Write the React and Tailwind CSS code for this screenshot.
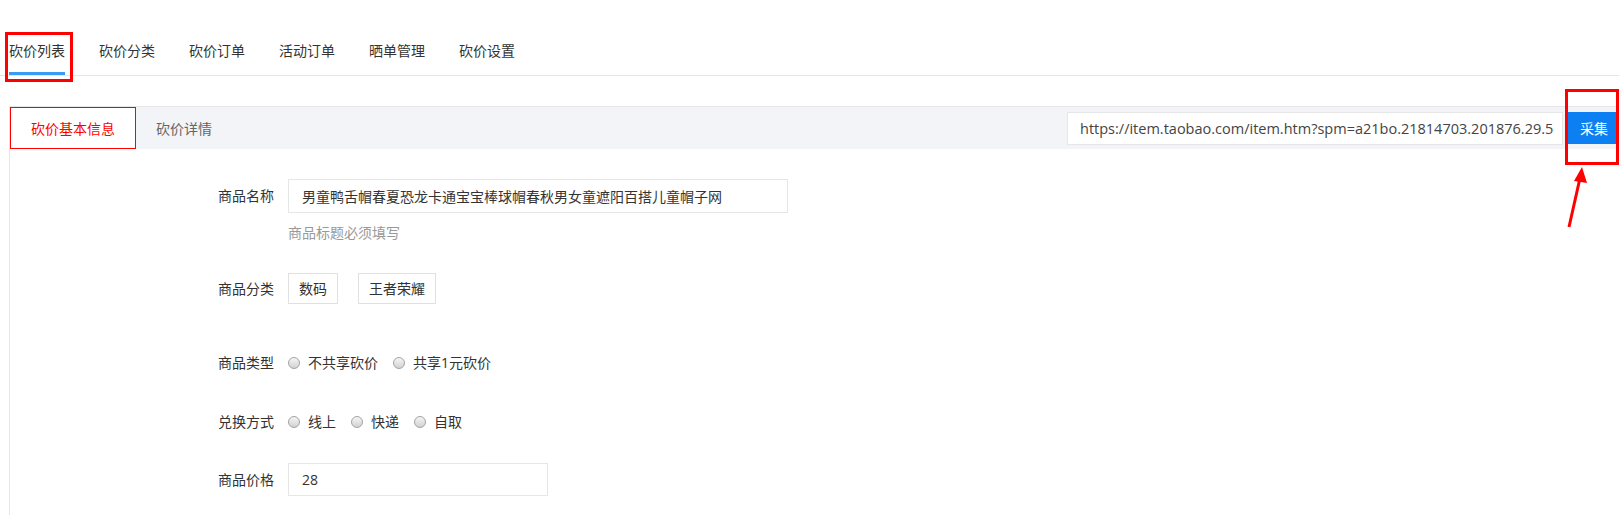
import React from 'react';

const navTabs = ['砍价列表', '砍价分类', '砍价订单', '活动订单', '晒单管理', '砍价设置'];

const Radio = ({ label }) => (
  <label className="flex items-center gap-[8px]">
    <span className="w-[12px] h-[12px] rounded-full border border-[#a3a3a3] bg-[linear-gradient(180deg,#f5f5f5,#d2d2d2)]" />
    <span className="text-[14px] leading-[20px] text-[#333]">{label}</span>
  </label>
);

function Row({ label, children, className = '' }) {
  return (
    <div className={`flex items-center ${className}`}>
      <div className="w-[264px] pr-0 text-right text-[14px] leading-[20px] text-[#333]">{label}</div>
      <div className="ml-[14px] flex items-center">{children}</div>
    </div>
  );
}

export default function App() {
  return (
    <div className="relative w-full h-[515px] overflow-hidden bg-white font-['Open_Sans','Noto_Sans_CJK_SC',sans-serif] text-[#333]">
      {/* 顶部导航 */}
      <div className="flex gap-[34px] pl-[9px] pt-[30px] border-b border-[#e6e6e6]">
        {navTabs.map((t, i) => (
          <div
            key={t}
            className={`text-[14px] leading-[42px] border-b-[3px] ${i === 0 ? 'border-[#3a9bf5]' : 'border-transparent'}`}
          >
            {t}
          </div>
        ))}
      </div>

      <div className="ml-[9px] mt-[30px] border-l border-[#e6e6e6] h-[500px]">
        {/* 标签栏 */}
        <div className="flex items-center h-[43px] border-t border-[#e6e6e6] bg-[#f3f4f8]">
          <div className="h-[42px] px-[20px] flex items-center border border-[#ff0000] bg-white text-[#ff0000] text-[14px]">
            砍价基本信息
          </div>
          <div className="px-[20px] text-[14px] text-[#666]">砍价详情</div>
          <div className="ml-auto flex items-center">
            <input
              readOnly
              value="https://item.taobao.com/item.htm?spm=a21bo.21814703.201876.29.5e2f11d9ZvGwkQ&id=622380913"
              className="w-[496px] h-[33px] bg-white border border-[#e6e6e6] pl-[12px] pr-[8px] text-[14.5px] text-[#444] outline-none font-['Open_Sans',sans-serif]"
            />
            <button className="ml-[3px] -mr-[3px] w-[56px] h-[32px] bg-[#0c7ff2] text-white text-[14px]">采集</button>
          </div>
        </div>

        {/* 表单 */}
        <Row label="商品名称" className="mt-[30px]">
          <input
            readOnly
            value="男童鸭舌帽春夏恐龙卡通宝宝棒球帽春秋男女童遮阳百搭儿童帽子网"
            className="w-[500px] h-[34px] border border-[#e6e6e6] pl-[13px] text-[14px] text-[#333] outline-none"
          />
        </Row>
        <div className="mt-[10px] pl-[278px] text-[14px] leading-[20px] text-[#999]">商品标题必须填写</div>

        <Row label="商品分类" className="mt-[30px]">
          <div className="flex gap-[20px]">
            <span className="h-[31px] px-[10px] flex items-center border border-[#e0e0e0] text-[14px]">数码</span>
            <span className="h-[31px] px-[10px] flex items-center border border-[#e0e0e0] text-[14px]">王者荣耀</span>
          </div>
        </Row>

        <Row label="商品类型" className="mt-[49px]">
          <div className="flex gap-[15px]">
            <Radio label="不共享砍价" />
            <Radio label="共享1元砍价" />
          </div>
        </Row>

        <Row label="兑换方式" className="mt-[39px]">
          <div className="flex gap-[15px]">
            <Radio label="线上" />
            <Radio label="快递" />
            <Radio label="自取" />
          </div>
        </Row>

        <Row label="商品价格" className="mt-[31px]">
          <input
            readOnly
            value="28"
            className="w-[260px] h-[33px] border border-[#e6e6e6] pl-[13px] text-[14px] text-[#333] outline-none"
          />
        </Row>
      </div>

      {/* 标注 */}
      <div className="absolute left-[5px] top-[32px] w-[68px] h-[50px] border-[3px] border-[#f00]" />
      <div className="absolute left-[1565px] top-[89px] w-[54px] h-[76px] border-[3px] border-[#f00]" />
      <svg className="absolute left-[1560px] top-[164px]" width="30" height="68" viewBox="0 0 30 68">
        <line x1="9" y1="63" x2="20" y2="14" stroke="#f00" strokeWidth="3" />
        <polygon points="22,3 14,17 27,19" fill="#f00" />
      </svg>
    </div>
  );
}
